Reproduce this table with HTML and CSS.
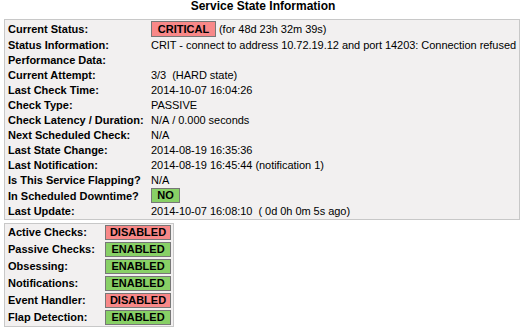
FILE: index.html
```html
<!DOCTYPE html>
<html>
<head>
<meta charset="utf-8">
<link rel="stylesheet" href="styles.css">
</head>
<body>
<div class="page">
  <div class="title">Service State Information</div>
  <div class="info-box">
    <div class="lbl">Current Status:</div>
    <div class="val tall"><span class="badge crit wide">CRITICAL</span>(for 48d 23h 32m 39s)</div>
    <div class="lbl">Status Information:</div>
    <div class="val">CRIT - connect to address 10.72.19.12 and port 14203: Connection refused</div>
    <div class="lbl">Performance Data:</div>
    <div class="val"></div>
    <div class="lbl">Current Attempt:</div>
    <div class="val">3/3&nbsp;&nbsp;(HARD state)</div>
    <div class="lbl">Last Check Time:</div>
    <div class="val">2014-10-07 16:04:26</div>
    <div class="lbl">Check Type:</div>
    <div class="val">PASSIVE</div>
    <div class="lbl">Check Latency / Duration:</div>
    <div class="val">N/A&nbsp;/&nbsp;0.000 seconds</div>
    <div class="lbl">Next Scheduled Check:&nbsp;&nbsp;</div>
    <div class="val">N/A</div>
    <div class="lbl">Last State Change:</div>
    <div class="val">2014-08-19 16:35:36</div>
    <div class="lbl">Last Notification:</div>
    <div class="val">2014-08-19 16:45:44&nbsp;(notification 1)</div>
    <div class="lbl">Is This Service Flapping?</div>
    <div class="val">N/A</div>
    <div class="lbl">In Scheduled Downtime?</div>
    <div class="val mid"><span class="badge ok small">NO</span></div>
    <div class="lbl">Last Update:</div>
    <div class="val">2014-10-07 16:08:10&nbsp;&nbsp;( 0d 0h 0m 5s ago)</div>
  </div>
  <div class="flags-box">
    <div class="lbl">Active Checks:</div>
    <div class="fval"><span class="badge crit flag">DISABLED</span></div>
    <div class="lbl">Passive Checks:</div>
    <div class="fval"><span class="badge ok flag">ENABLED</span></div>
    <div class="lbl">Obsessing:</div>
    <div class="fval"><span class="badge ok flag">ENABLED</span></div>
    <div class="lbl">Notifications:</div>
    <div class="fval"><span class="badge ok flag">ENABLED</span></div>
    <div class="lbl">Event Handler:</div>
    <div class="fval"><span class="badge crit flag">DISABLED</span></div>
    <div class="lbl">Flap Detection:</div>
    <div class="fval"><span class="badge ok flag">ENABLED</span></div>
  </div>
</div>
</body>
</html>
```
FILE: styles.css
```css
html, body {
  margin: 0;
  padding: 0;
  background: #ffffff;
}
body {
  font-family: "Liberation Sans", Arial, sans-serif;
  font-size: 11px;
  color: #000000;
}
.page {
  padding: 0 4px;
}
.title {
  font-size: 12px;
  font-weight: bold;
  line-height: 13px;
  text-align: center;
  margin-bottom: 6px;
}
.info-box {
  display: inline-grid;
  grid-template-columns: 146px auto;
  align-items: center;
  background: #f2f0f0;
  border: 1px solid #c8c8c8;
  vertical-align: top;
}
.flags-box {
  display: grid;
  width: fit-content;
  grid-template-columns: 100px auto;
  align-items: center;
  background: #f2f0f0;
  border: 1px solid #c8c8c8;
  margin-top: 3px;
}
.lbl {
  font-weight: bold;
  line-height: 13px;
  padding: 1px 0 1px 3px;
  white-space: nowrap;
}
.val {
  line-height: 13px;
  padding: 1px 3px 1px 0;
  white-space: nowrap;
  min-height: 13px;
  letter-spacing: -0.04px;
}
.val.tall {
  padding: 1px 3px 1px 0;
  display: flex;
  align-items: center;
}
.val.mid {
  padding: 0 3px 1px 0;
  display: flex;
}
.fval {
  padding: 1px 2px 1px 0;
  display: flex;
}
.badge {
  display: inline-block;
  box-sizing: border-box;
  border: 1px solid #777777;
  font-weight: bold;
  text-align: center;
  letter-spacing: 0;
}
.crit {
  background: #f88888;
}
.ok {
  background: #88d066;
}
.wide {
  width: 65px;
  height: 16px;
  line-height: 14px;
  margin-right: 3px;
}
.small {
  width: 29px;
  height: 15px;
  line-height: 13px;
}
.flag {
  width: 66px;
  height: 15px;
  line-height: 13px;
}
```
